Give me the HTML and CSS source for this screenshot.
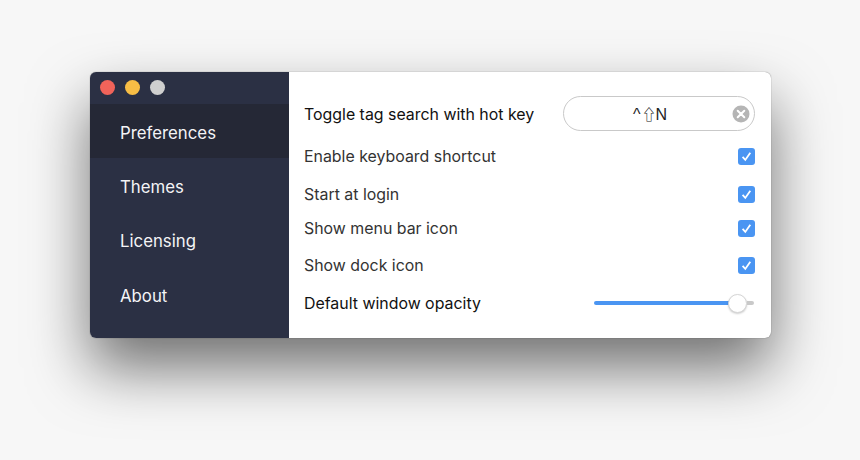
FILE: index.html
```html
<!DOCTYPE html>
<html lang="en">
<head>
	<meta charset="UTF-8">
	<title>Preferences</title>
	<link rel="stylesheet" href="styles.css">
</head>
<body>
<div class="window">
	<div class="sidebar">
		<div class="titlebar">
			<span class="light red"></span>
			<span class="light yellow"></span>
			<span class="light grey"></span>
		</div>
		<div class="nav active">Preferences</div>
		<div class="nav">Themes</div>
		<div class="nav">Licensing</div>
		<div class="nav">About</div>
	</div>
	<div class="content">
		<div class="row row-hotkey">
			<span class="label dark">Toggle tag search with hot key</span>
			<div class="hotkey">
				<span class="keys">^<span class="shift">⇧</span>N</span>
				<span class="clear">
					<svg width="18" height="18" viewBox="0 0 18 18"><circle cx="9" cy="9" r="8.5" fill="#b5b5b5"/><path d="M5.7 5.7l6.6 6.6M12.3 5.7l-6.6 6.6" stroke="#fff" stroke-width="2" stroke-linecap="round"/></svg>
				</span>
			</div>
		</div>
		<div class="row row-keyboard">
			<span class="label">Enable keyboard shortcut</span>
			<span class="check"><svg width="17" height="17" viewBox="0 0 17 17"><path d="M4.6 8.9l2.7 3 5-7.2" fill="none" stroke="#fff" stroke-width="1.8"/></svg></span>
		</div>
		<div class="row row-login">
			<span class="label">Start at login</span>
			<span class="check"><svg width="17" height="17" viewBox="0 0 17 17"><path d="M4.6 8.9l2.7 3 5-7.2" fill="none" stroke="#fff" stroke-width="1.8"/></svg></span>
		</div>
		<div class="row row-menubar">
			<span class="label">Show menu bar icon</span>
			<span class="check"><svg width="17" height="17" viewBox="0 0 17 17"><path d="M4.6 8.9l2.7 3 5-7.2" fill="none" stroke="#fff" stroke-width="1.8"/></svg></span>
		</div>
		<div class="row row-dock">
			<span class="label">Show dock icon</span>
			<span class="check"><svg width="17" height="17" viewBox="0 0 17 17"><path d="M4.6 8.9l2.7 3 5-7.2" fill="none" stroke="#fff" stroke-width="1.8"/></svg></span>
		</div>
		<div class="row row-opacity">
			<span class="label dark">Default window opacity</span>
			<div class="slider">
				<div class="fill"></div>
				<div class="knob"></div>
				<div class="rest"></div>
			</div>
		</div>
	</div>
</div>
</body>
</html>
```
FILE: styles.css
```css
html, body {
	margin: 0;
	height: 100%;
	background-color: #f7f7f7;
	font-family: Inter, "Liberation Sans", sans-serif;
	overflow: hidden;
}
body {
	padding: 72px 0 0 90px;
	box-sizing: border-box;
}
.window {
	display: flex;
	width: 681px;
	height: 266px;
	border-radius: 6px;
	overflow: hidden;
	background-color: #fff;
	box-shadow: 0 30px 60px rgba(0, 0, 0, 0.55), 0 0 1px rgba(0, 0, 0, 0.6);
}
.sidebar {
	width: 199px;
	flex: none;
	background-color: #2b3044;
	color: #f4f4f6;
	font-size: 16.8px;
}
.titlebar {
	display: flex;
	align-items: center;
	gap: 10px;
	height: 32px;
	padding-left: 10px;
	padding-bottom: 2px;
	box-sizing: border-box;
}
.light {
	width: 15px;
	height: 15px;
	border-radius: 50%;
}
.red { background-color: #f0635a; }
.yellow { background-color: #f7bd45; }
.grey { background-color: #cfcfcf; }
.nav {
	display: flex;
	align-items: center;
	height: 54.5px;
	box-sizing: border-box;
	padding: 3px 0 0 30px;
}
.nav.active {
	height: 54px;
	background-color: #252836;
}
.content {
	flex: 1;
	padding: 24px 16px 0 15px;
}
.row {
	display: flex;
	align-items: center;
	justify-content: space-between;
}
.row-hotkey { height: 35px; margin-bottom: 5px; }
.row-keyboard { height: 40px; }
.row-login { height: 36px; }
.row-menubar { height: 32px; }
.row-dock { height: 42px; }
.row-opacity { height: 34px; }
.label {
	font-size: 15.9px;
	color: #333;
}
.label.dark {
	color: #111;
	padding-top: 1px;
}
.hotkey {
	position: relative;
	display: flex;
	align-items: center;
	justify-content: center;
	width: 192px;
	height: 35px;
	box-sizing: border-box;
	border: 1px solid #c9c9c9;
	border-radius: 18px;
	padding-right: 18px;
}
.keys {
	font-family: "Liberation Sans", sans-serif;
	font-size: 16px;
	color: #222;
}
.shift {
	font-family: "Noto Sans CJK JP", "DejaVu Sans", sans-serif;
	font-size: 15px;
	margin: 0 -1px 0 1px;
}
.clear {
	position: absolute;
	right: 4px;
	top: 8px;
	width: 18px;
	height: 18px;
}
.check {
	width: 17px;
	height: 17px;
	border-radius: 3px;
	background-color: #4a95f2;
}
.check svg, .clear svg {
	display: block;
}
.slider {
	display: flex;
	align-items: center;
	width: 160px;
	margin-right: 1px;
}
.fill {
	flex: 1;
	height: 4px;
	border-radius: 2px 0 0 2px;
	background-color: #4a95f2;
}
.knob {
	width: 19px;
	height: 19px;
	flex: none;
	box-sizing: border-box;
	margin-left: -1px;
	border: 1px solid #d6d6d6;
	border-radius: 50%;
	background-color: #fff;
	box-shadow: 0 1px 2px rgba(0, 0, 0, 0.2);
}
.rest {
	width: 7px;
	height: 4px;
	flex: none;
	background-color: #c9c9c9;
	border-radius: 0 2px 2px 0;
}
```
